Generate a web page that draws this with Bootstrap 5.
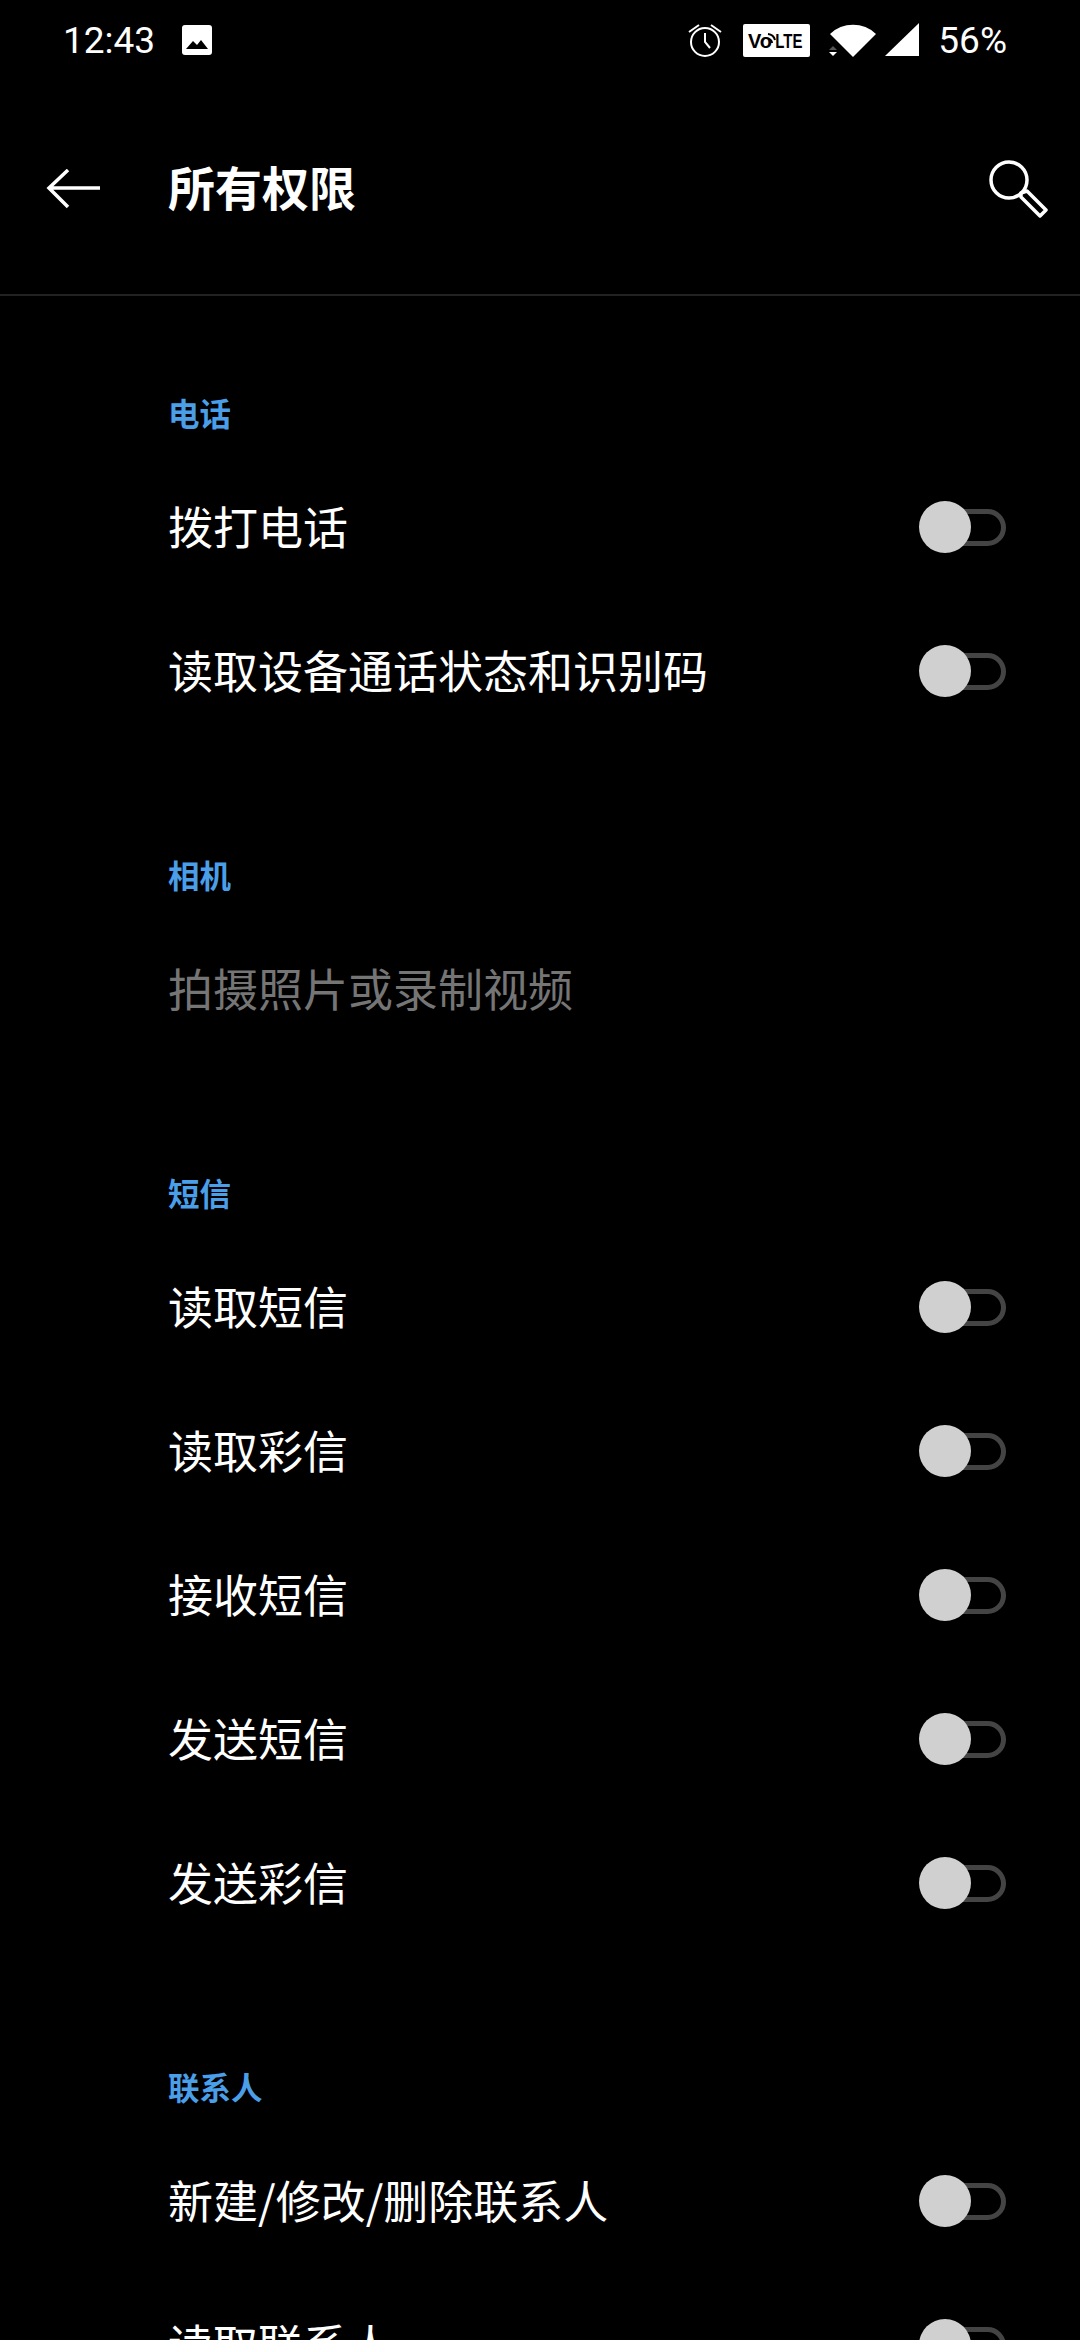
<!DOCTYPE html>
<html lang="zh"><head><meta charset="utf-8"><title>所有权限</title>
<link href="https://cdn.jsdelivr.net/npm/bootstrap@5.3.0/dist/css/bootstrap.min.css" rel="stylesheet">
<style>
html,body{background:#000;height:2340px;overflow:hidden}
body{font-family:"Noto Sans CJK SC","Noto Sans",sans-serif;color:#fff}
.stat{height:80px;padding:0 73px 0 63px;font-family:Roboto,sans-serif;font-size:37px;line-height:1}
.stat svg{display:block}
.tool{height:216px;padding:4px 32px 0 46px;border-bottom:2px solid #222}
.ttl{font-size:47px;font-weight:700;line-height:1;margin-left:68px;margin-bottom:8px}
.sect{padding-top:92px}
.sect.first{padding-top:77px}
.shead{height:82px;padding:0 0 2px 168px;font-size:31.5px;font-weight:700;color:#4a9fe8;line-height:1}
.rowi{height:144px;padding:0 74px 0 168px;font-size:45px;line-height:1}
.rowi>span:first-child{padding-bottom:3px}
.dim{color:#757575}
.tog{width:87px;height:52px;flex:none;position:relative}
.tog::before{content:"";position:absolute;right:0;top:8px;width:60px;height:37px;border:5px solid #444;border-radius:19px}
.tog::after{content:"";position:absolute;left:0;top:0;width:52px;height:52px;border-radius:50%;background:#d0d0d0}
.ic-volte{margin-left:20px}
.ic-wifi{margin-left:19px}
.ic-sig{margin-left:7px}
.pct{margin-left:18px}
.left-stat{gap:27px}
</style></head><body>
<div class="stat d-flex align-items-center justify-content-between">
 <div class="d-flex align-items-center left-stat"><span>12:43</span>
  <svg width="30" height="30" viewBox="0 0 30 30"><rect width="30" height="30" rx="3" fill="#fff"/><path d="M4 24l7-8 4 4 4-5 7 9z" fill="#000"/></svg></div>
 <div class="d-flex align-items-center">
  <svg width="36" height="36" viewBox="0 0 36 36" fill="none" stroke="#fff" stroke-width="2"><circle cx="18" cy="20" r="14"/><path d="M18 11v9l5 6M2 10l10-7M34 10L24 3"/></svg>
  <svg class="ic-volte" width="67" height="33" viewBox="0 0 67 33"><rect width="67" height="33" rx="2" fill="#fff"/><text x="5" y="24" font-family="Liberation Sans" font-weight="700" font-size="20" fill="#000">Vo</text><text transform="scale(.75 1)" x="43" y="24" font-family="Liberation Sans" font-weight="700" font-size="20" fill="#000">LTE</text><path d="M25 15a4 4 0 0 1 4 4M25 10a8 8 0 0 1 7 6" fill="none" stroke="#000" stroke-width="2"/></svg>
  <svg class="ic-wifi" width="48" height="36" viewBox="0 0 48 36"><path d="M1 12A33 33 0 0 1 47 12L24 35z" fill="#fff"/><path d="M0 28l4-4 4 4z" fill="#555"/><path d="M0 30l8 0-4 4z" fill="#fff"/></svg>
  <svg class="ic-sig" width="36" height="36" viewBox="0 0 36 36"><path d="M1 34L35 1v33z" fill="#fff"/></svg>
  <span class="pct">56%</span>
 </div>
</div>
<div class="tool d-flex align-items-center justify-content-between">
 <div class="d-flex align-items-center">
  <svg width="54" height="40" viewBox="0 0 54 40" fill="none" stroke="#fff" stroke-width="3.5"><path d="M54 19H3M22 1L3 19l19 19"/></svg>
  <span class="ttl">所有权限</span>
 </div>
 <svg width="60" height="60" viewBox="0 0 60 60" fill="none" stroke="#fff" stroke-width="3.5"><circle cx="21" cy="21" r="18"/><path d="M33 34l6-2 19 19-6 6-19-19z" stroke-linejoin="round"/></svg>
</div>
<div class="sect first">
 <div class="shead d-flex align-items-center">电话</div>
 <div class="rowi d-flex align-items-center justify-content-between"><span>拨打电话</span><span class="tog"></span></div>
 <div class="rowi d-flex align-items-center justify-content-between"><span>读取设备通话状态和识别码</span><span class="tog"></span></div>
</div>
<div class="sect">
 <div class="shead d-flex align-items-center">相机</div>
 <div class="rowi d-flex align-items-center dim"><span>拍摄照片或录制视频</span></div>
</div>
<div class="sect">
 <div class="shead d-flex align-items-center">短信</div>
 <div class="rowi d-flex align-items-center justify-content-between"><span>读取短信</span><span class="tog"></span></div>
 <div class="rowi d-flex align-items-center justify-content-between"><span>读取彩信</span><span class="tog"></span></div>
 <div class="rowi d-flex align-items-center justify-content-between"><span>接收短信</span><span class="tog"></span></div>
 <div class="rowi d-flex align-items-center justify-content-between"><span>发送短信</span><span class="tog"></span></div>
 <div class="rowi d-flex align-items-center justify-content-between"><span>发送彩信</span><span class="tog"></span></div>
</div>
<div class="sect">
 <div class="shead d-flex align-items-center">联系人</div>
 <div class="rowi d-flex align-items-center justify-content-between"><span>新建/修改/删除联系人</span><span class="tog"></span></div>
 <div class="rowi d-flex align-items-center justify-content-between"><span>读取联系人</span><span class="tog"></span></div>
</div>
<script src="https://cdn.jsdelivr.net/npm/bootstrap@5.3.0/dist/js/bootstrap.bundle.min.js"></script>
</body></html>
